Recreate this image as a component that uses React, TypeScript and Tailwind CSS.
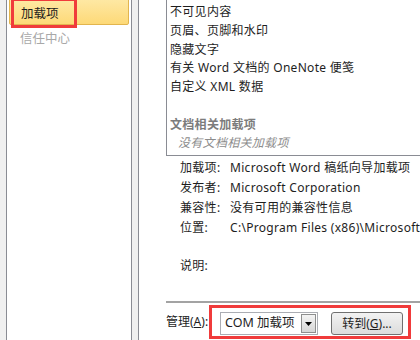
import React from "react";

export default function App() {
  const font = { fontFamily: '"Noto Sans", "Noto Sans CJK SC", sans-serif' };
  return (
    <div
      className="flex h-[340px] w-[420px] overflow-hidden bg-[#f0f0f0] text-[12px] text-[#1e1e1e]"
      style={font}
    >
      {/* left nav */}
      <div className="ml-[6px] flex h-full w-[126px] shrink-0 flex-col border-x border-[#8a8c94] bg-white">
        <div className="relative mx-[2px] mt-[-3px] h-[28px] rounded-[2px] border border-[#e2b54e] bg-gradient-to-b from-[#fee9a6] to-[#fdd977]">
          <span className="absolute left-[11px] top-[7px] whitespace-nowrap text-[12.5px] leading-[17px]">加载项</span>
          <div className="absolute left-[1px] top-0 h-[30px] w-[66px] border-[3px] border-[#f03b3b]" />
        </div>
        <div className="ml-[13px] mt-[5px] whitespace-nowrap text-[12.5px] leading-[17px] text-[#a8a8a8]">信任中心</div>
      </div>
      <div className="w-[6px] shrink-0" />
      {/* main */}
      <div className="flex h-full min-w-0 flex-1 flex-col overflow-hidden border-l border-[#8a8c94] bg-white pl-[27px] tracking-[0.3px]">
        <div className="h-[156px] border-b border-l border-[#8a8c94] pl-[3px] pt-[3px] leading-[18.75px]">
          <div>不可见内容</div>
          <div>页眉、页脚和水印</div>
          <div>隐藏文字</div>
          <div>有关 Word 文档的 OneNote 便笺</div>
          <div>自定义 XML 数据</div>
          <div>&nbsp;</div>
          <div className="font-bold text-[#7c7c7c]">文档相关加载项</div>
          <div className="pl-[8px] italic text-[#8c8c8c]">没有文档相关加载项</div>
        </div>
        <div className="pl-[14px] pt-[2px] leading-[20px]">
          <div className="flex whitespace-nowrap">
            <span className="w-[50px] shrink-0">加载项:</span>
            <span>Microsoft Word 稿纸向导加载项</span>
          </div>
          <div className="flex whitespace-nowrap">
            <span className="w-[50px] shrink-0">发布者:</span>
            <span>Microsoft Corporation</span>
          </div>
          <div className="flex whitespace-nowrap">
            <span className="w-[50px] shrink-0">兼容性:</span>
            <span>没有可用的兼容性信息</span>
          </div>
          <div className="flex whitespace-nowrap">
            <span className="w-[50px] shrink-0">位置:</span>
            <span>C:\Program Files (x86)\Microsoft</span>
          </div>
          <div className="mt-[18px]">说明:</div>
        </div>
        <div className="flex-1" />
        <div className="h-[2px] bg-[#a3a3a3]" />
        <div className="flex h-[37px] items-center tracking-normal">
          <span className="w-[43px] shrink-0 whitespace-nowrap">
            管理(<span className="underline">A</span>):
          </span>
          <div className="flex h-[34px] w-[202px] shrink-0 items-center border-[3px] border-[#f03b3b] pl-[8px] pt-[4px]">
            <div className="flex h-[23px] w-[98px] shrink-0 items-center border border-[#abadb3] bg-white">
              <span className="ml-[4px] flex-1 whitespace-nowrap text-[12.5px]">COM 加载项</span>
              <div className="mr-[1px] flex h-[19px] w-[15px] items-center justify-center border border-[#8e8f8f] bg-gradient-to-b from-[#f4f4f4] to-[#d6d6d6]">
                <svg width="7" height="4" viewBox="0 0 7 4">
                  <path d="M0 0H7L3.5 4Z" fill="#000" />
                </svg>
              </div>
            </div>
            <div className="ml-[13px] flex h-[23px] w-[72px] shrink-0 items-center justify-center whitespace-nowrap rounded-[3px] border border-[#707070] bg-gradient-to-b from-[#f2f2f2] to-[#dcdcdc]">
              转到(<span className="underline">G</span>)...
            </div>
          </div>
        </div>
      </div>
    </div>
  );
}
